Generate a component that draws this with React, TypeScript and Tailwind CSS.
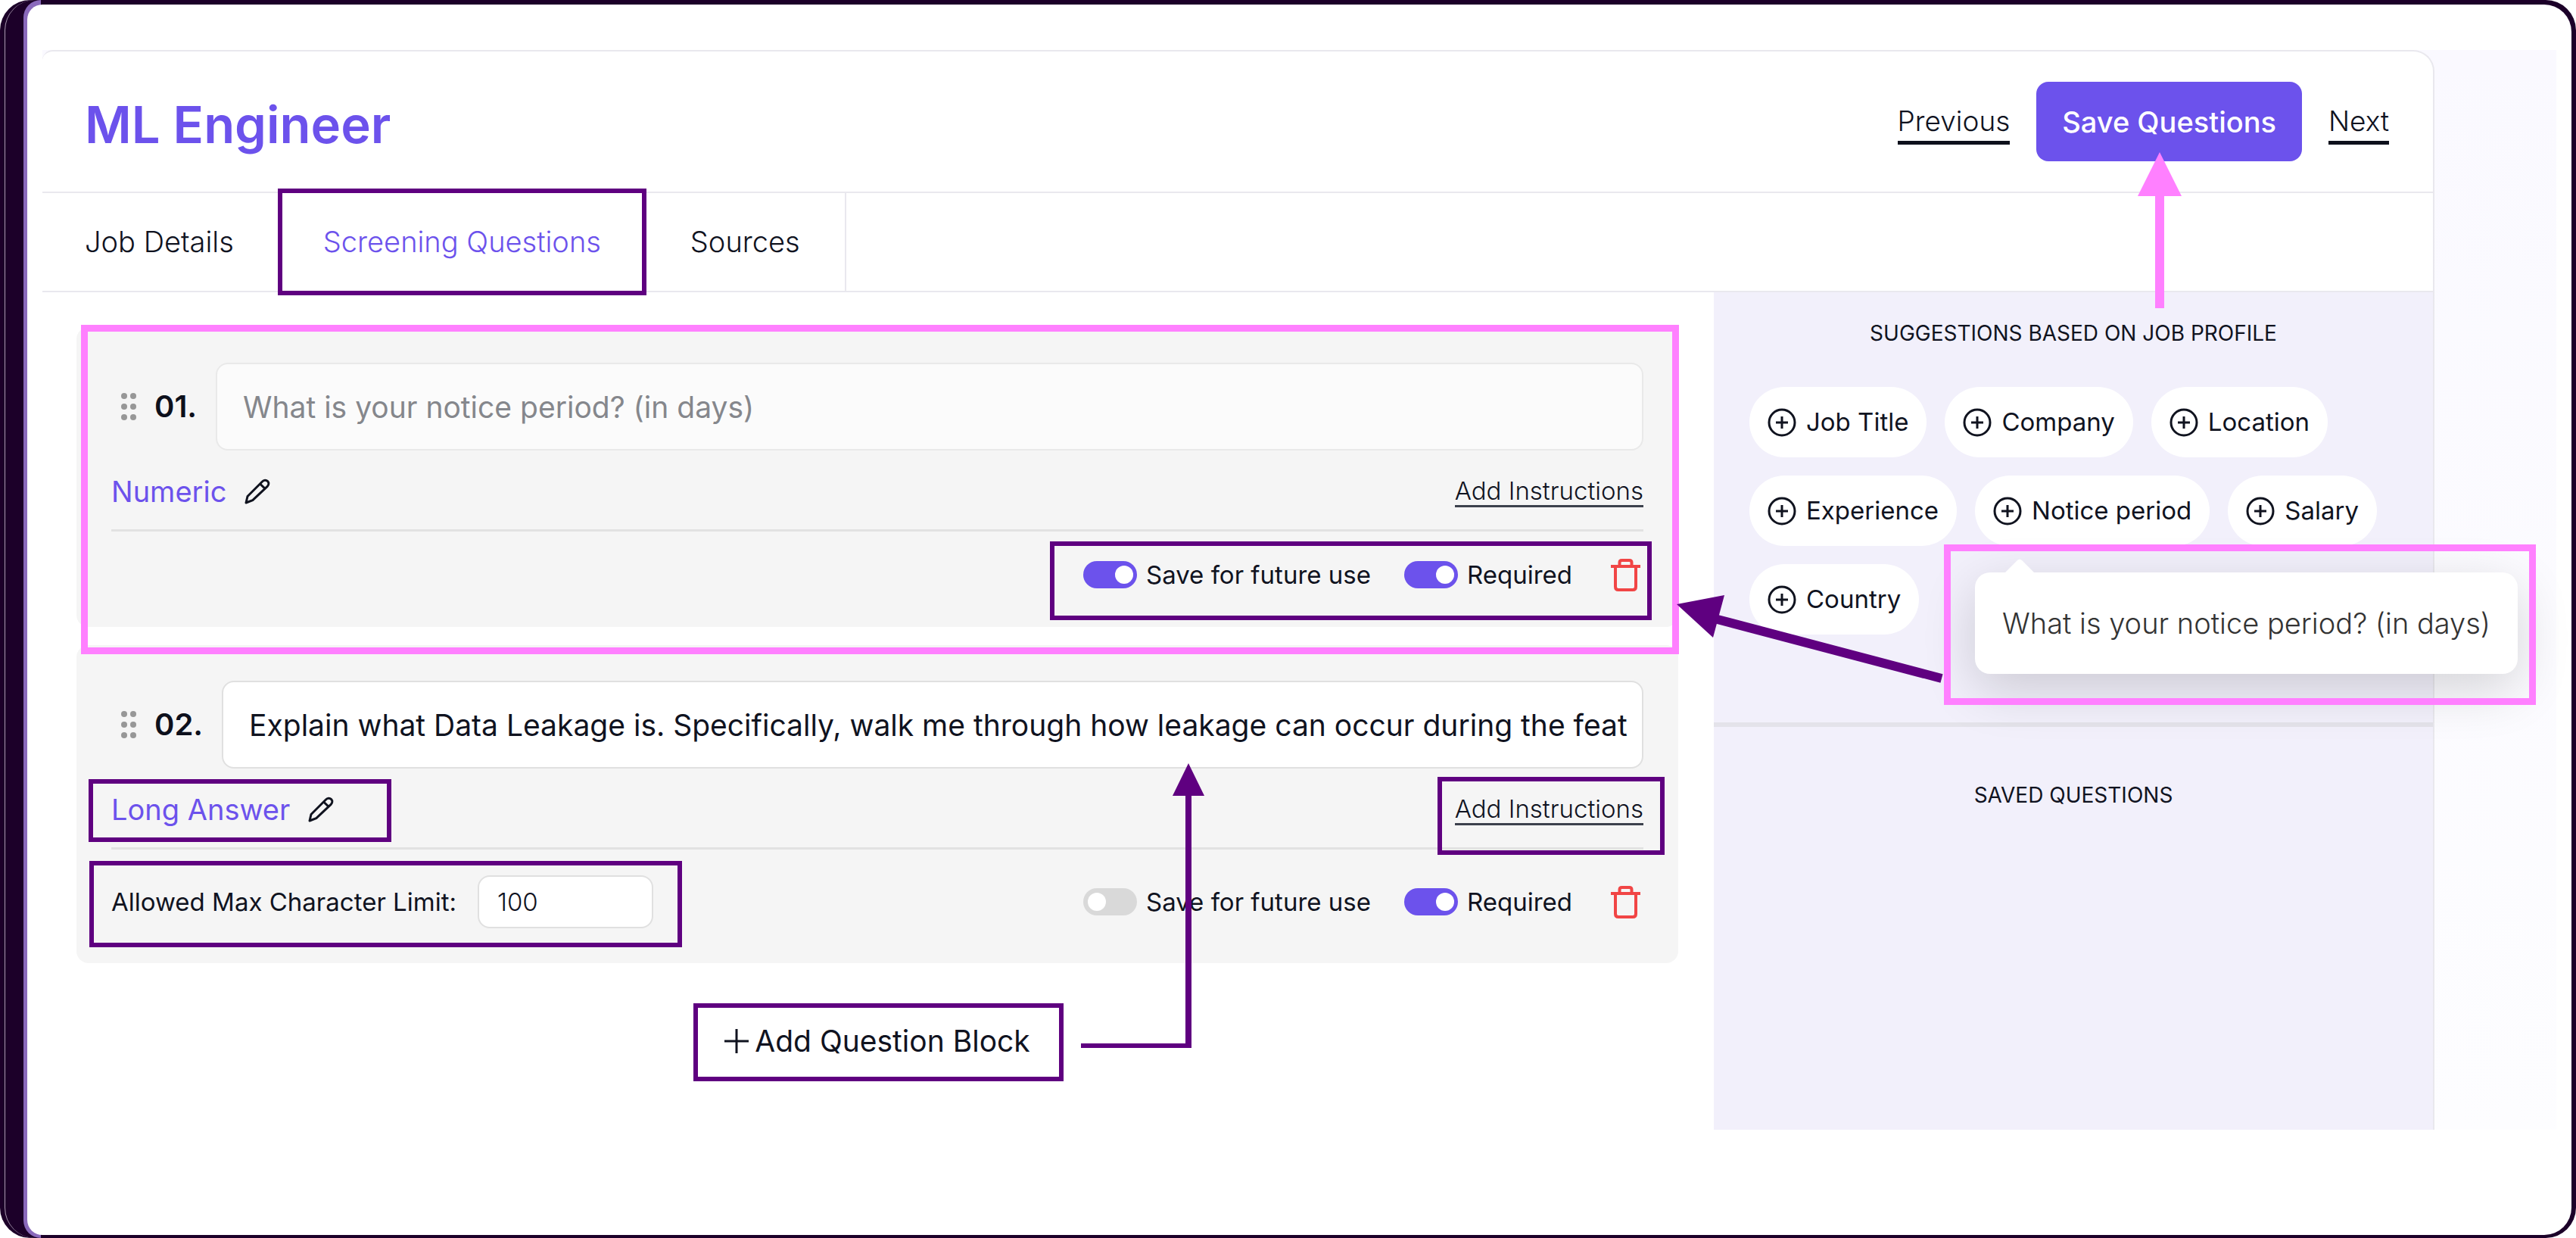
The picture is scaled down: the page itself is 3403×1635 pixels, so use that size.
import React, { useState } from "react";

interface Question {
  id: string;
  number: string;
  text: string;
  type: string;
  disabled?: boolean;
  limit?: number;
  saveForFuture: boolean;
  required: boolean;
}

const initialQuestions: Question[] = [
  {
    id: "q1",
    number: "01.",
    text: "What is your notice period? (in days)",
    type: "Numeric",
    disabled: true,
    saveForFuture: true,
    required: true,
  },
  {
    id: "q2",
    number: "02.",
    text: "Explain what Data Leakage is. Specifically, walk me through how leakage can occur during the feat",
    type: "Long Answer",
    limit: 100,
    saveForFuture: false,
    required: true,
  },
];

const tabs = ["Job Details", "Screening Questions", "Sources"];

const suggestions = [
  "Job Title",
  "Company",
  "Location",
  "Experience",
  "Notice period",
  "Salary",
  "Country",
];

// Coloured frame drawn over the element that it points out
const Highlight = ({ className }: { className: string }) => (
  <span
    aria-hidden="true"
    className={`pointer-events-none absolute z-10 ${className}`}
  />
);

const PencilIcon = () => (
  <svg width="34" height="34" viewBox="0 0 34 34" fill="none" stroke="#10131f" strokeWidth="3" strokeLinejoin="round">
    <path d="M2 32 L4 23.5 L23.5 4 C25.5 1.8 28.6 1.6 30.6 3.6 C32.4 5.6 32.2 8.4 30.2 10.4 L10.8 28.6 Z" />
    <path d="M20.5 7 L27.2 13.4" />
  </svg>
);

const TrashIcon = () => (
  <svg width="39" height="44" viewBox="0 0 39 44" fill="none" stroke="#f14545" strokeWidth="4">
    <path d="M0 11 H39" />
    <path d="M11.5 10 V6 Q11.5 3 14.5 3 H24.5 Q27.5 3 27.5 6 V10" />
    <path d="M6 11 V38 Q6 42 10 42 H29 Q33 42 33 38 V11" />
  </svg>
);

const GripIcon = () => (
  <svg width="20" height="36" viewBox="0 0 20 36" fill="#979797">
    <circle cx="4" cy="4" r="4" />
    <circle cx="16" cy="4" r="4" />
    <circle cx="4" cy="18" r="4" />
    <circle cx="16" cy="18" r="4" />
    <circle cx="4" cy="32" r="4" />
    <circle cx="16" cy="32" r="4" />
  </svg>
);

const PlusCircleIcon = () => (
  <svg width="38" height="38" viewBox="0 0 38 38" fill="none" stroke="#10131f" strokeWidth="3">
    <circle cx="19" cy="19" r="17" />
    <path d="M19 11 V27 M11 19 H27" />
  </svg>
);

const Toggle = ({
  label,
  checked,
  onChange,
}: {
  label: string;
  checked: boolean;
  onChange: (value: boolean) => void;
}) => (
  <label className="flex items-center gap-3 text-[33px] leading-[40px] text-[#10131f]">
    <input
      type="checkbox"
      role="switch"
      checked={checked}
      onChange={(e) => onChange(e.target.checked)}
      className="h-9 w-[71px] shrink-0 appearance-none rounded-full bg-[#d9d9d9] p-[6px] before:block before:size-6 before:rounded-full before:bg-white checked:bg-[#6c52ec] checked:before:ml-9"
    />
    {label}
  </label>
);

const QuestionCard = ({ question }: { question: Question }) => {
  const [text, setText] = useState(question.text);
  const [limit, setLimit] = useState(String(question.limit ?? ""));
  const [save, setSave] = useState(question.saveForFuture);
  const [required, setRequired] = useState(question.required);
  const hasLimit = question.limit !== undefined;

  return (
    <section className="relative rounded-[16px] bg-[#f5f5f5] px-[46px] pb-[46px] pt-[47px]">
      <div className="flex items-center">
        <button type="button" aria-label="Reorder question" className="ml-[13px]">
          <GripIcon />
        </button>
        <label
          htmlFor={question.id}
          className="ml-6 mr-[25px] text-[40px] leading-[48px] font-semibold text-[#0d101c]"
        >
          {question.number}
        </label>
        <input
          id={question.id}
          type="text"
          value={text}
          disabled={question.disabled}
          onChange={(e) => setText(e.target.value)}
          className="h-[116px] min-w-0 flex-1 rounded-[16px] border-2 border-[#e0e0e0] bg-white pl-[34px] pr-4 text-[39px] text-[#10131f] disabled:border-[#e9e9e9] disabled:bg-[#fbfbfb] disabled:text-[#85878c]"
        />
      </div>

      <div className="flex h-[107px] items-center justify-between border-b-3 border-[#e2e2e2] pt-1">
        <div className="relative flex items-center gap-6">
          <span className="text-[38px] leading-[46px] text-[#6c52ec]">
            {question.type}
          </span>
          <button type="button" aria-label="Edit type">
            <PencilIcon />
          </button>
          {hasLimit && (
            <Highlight className="-left-[30px] -right-[76px] -top-[17px] -bottom-[20px] border-[6px] border-[#5f0080]" />
          )}
        </div>
        <div className="relative">
          <a
            href="#"
            className="block border-b-3 border-[#3c414d] text-[33px] leading-[38px] font-light text-[#10131f]"
          >
            Add Instructions
          </a>
          {hasLimit && (
            <Highlight className="-left-[23px] -right-[28px] -top-[23px] -bottom-[39px] border-[6px] border-[#5f0080]" />
          )}
        </div>
      </div>

      <div className="flex items-center pt-[34px]">
        {hasLimit && (
          <div className="relative flex items-center gap-7 text-[33px] leading-[40px] text-[#10131f]">
            <label htmlFor={`${question.id}-limit`}>
              Allowed Max Character Limit:
            </label>
            <input
              id={`${question.id}-limit`}
              type="text"
              value={limit}
              onChange={(e) => setLimit(e.target.value)}
              className="h-[70px] w-[232px] rounded-[16px] border-2 border-[#e0e0e0] bg-white px-6 text-[33px] font-light"
            />
            <Highlight className="-left-[29px] -right-[38px] -top-[19px] -bottom-[25px] border-[6px] border-[#5f0080]" />
          </div>
        )}
        <div className="relative ml-auto flex h-[46px] items-center">
          <Toggle label="Save for future use" checked={save} onChange={setSave} />
          <div className="ml-11">
            <Toggle label="Required" checked={required} onChange={setRequired} />
          </div>
          <button type="button" aria-label="Delete question" className="ml-[51px] mr-1">
            <TrashIcon />
          </button>
          {!hasLimit && (
            <Highlight className="-left-[44px] -right-[11px] -top-[21px] -bottom-[37px] border-[6px] border-[#5f0080]" />
          )}
        </div>
      </div>

      {!hasLimit && (
        <Highlight className="left-[6px] -right-px -top-[3px] -bottom-[36px] border-[9px] border-[#ff80ff]" />
      )}
    </section>
  );
};

const NoticeTooltip = () => (
  <div role="tooltip" className="absolute left-0 top-full z-20 mt-[35px]">
    <div className="relative rounded-[20px] bg-white px-9 py-[43px] text-[38px] leading-[48px] font-light whitespace-nowrap text-[#333333] shadow-[0_20px_70px_rgba(0,0,0,0.16)]">
      What is your notice period? (in days)
    </div>
    <svg width="40" height="19" viewBox="0 0 40 19" className="absolute -top-[18px] left-[39px]" fill="#fff">
      <path d="M0 19 L17 2 Q20 -1 23 2 L40 19 Z" />
    </svg>
    <Highlight className="-left-[41px] -right-[24px] -top-[37px] -bottom-[41px] border-[9px] border-[#ff80ff]" />
    {/* arrow to the first question */}
    <svg
      width="356"
      height="124"
      viewBox="0 0 356 124"
      className="pointer-events-none absolute -left-[394px] top-[28px] z-20"
    >
      <path d="M50 33 L350 112" stroke="#5f0080" strokeWidth="12" />
      <path d="M0 14 L63 2 L48 58 Z" fill="#5f0080" />
    </svg>
  </div>
);

const App = () => {
  const [activeTab, setActiveTab] = useState("Screening Questions");

  return (
    <div className="bg-white font-['Inter','Liberation_Sans',sans-serif]">
      <div className="relative flex min-h-screen overflow-hidden rounded-[40px] bg-[#1c0029] pb-1 pl-[31px] pr-[6px] pt-[6px]">
        <span className="absolute -right-10 inset-y-0 left-[6px] rounded-l-[40px] border-l border-[#a99bb0]" />
        <span className="absolute inset-y-0 left-[31px] w-[23px] rounded-l-[24px] bg-[#8a69bb]" />

        <div className="relative ml-[5px] min-w-0 flex-1 rounded-l-[20px] rounded-r-[36px] bg-white px-5 pb-[138px] pt-[60px]">
          <div className="flex bg-linear-to-b from-[#faf9ff] to-[#fdfdff]">
            <main className="min-w-0 flex-1 rounded-tl-[14px] rounded-tr-[28px] border-r-2 border-t-2 border-[#e9e8ee] bg-white">
              <header className="flex h-[187px] items-center justify-between border-b-2 border-[#e9e8ee] pl-14 pr-[58px]">
                <h1 className="pt-2 text-[67px] leading-[80px] font-semibold text-[#6c52ec]">
                  ML Engineer
                </h1>
                <nav className="flex items-center gap-[35px] text-[37px] leading-[44px]">
                  <a href="#" className="border-b-5 border-[#0d101c] pt-2 pb-1 font-light text-[#10131f]">
                    Previous
                  </a>
                  <div className="relative">
                    <button
                      type="button"
                      className="h-[105px] rounded-[16px] bg-[#6c52ec] px-[34px] text-[38px] font-medium text-white"
                    >
                      Save Questions
                    </button>
                    <svg
                      width="58"
                      height="206"
                      viewBox="0 0 58 206"
                      className="pointer-events-none absolute left-[134px] top-[93px] z-20"
                      fill="#ff80ff"
                    >
                      <path d="M29 0 L58 58 H35 V206 H23 V58 H0 Z" />
                    </svg>
                  </div>
                  <a href="#" className="border-b-5 border-[#0d101c] pt-2 pb-1 font-light text-[#10131f]">
                    Next
                  </a>
                </nav>
              </header>

              <div role="tablist" className="flex h-[131px] border-b-2 border-[#e9e8ee]">
                {tabs.map((tab) => (
                  <button
                    key={tab}
                    type="button"
                    role="tab"
                    aria-selected={tab === activeTab}
                    onClick={() => setActiveTab(tab)}
                    className={`relative px-[59px] text-[38px] font-light first:pl-14 last:border-r-2 last:border-[#e9e8ee] ${
                      tab === activeTab ? "text-[#6c52ec]" : "text-[#10131f]"
                    }`}
                  >
                    {tab}
                    {tab === activeTab && (
                      <Highlight className="-inset-x-px -bottom-[6px] -top-[6px] border-[6px] border-[#5f0080]" />
                    )}
                  </button>
                ))}
              </div>

              <div className="flex">
                <div className="flex min-w-0 flex-1 flex-col gap-6 pb-16 pl-[45px] pr-[47px] pt-[46px]">
                  {initialQuestions.map((q) => (
                    <QuestionCard key={q.id} question={q} />
                  ))}

                  <div className="relative mt-14 self-center">
                    <button
                      type="button"
                      className="flex items-center gap-2 px-10 text-[39px] leading-[46px] text-[#10131f]"
                    >
                      <svg width="32" height="32" viewBox="0 0 32 32" stroke="#10131f" strokeWidth="3">
                        <path d="M16 0 V32 M0 16 H32" />
                      </svg>
                      Add Question Block
                    </button>
                    <Highlight className="-left-px -right-1 -bottom-[30px] -top-[27px] border-[6px] border-[#5f0080]" />
                    {/* elbow arrow up to the second question */}
                    <svg
                      width="164"
                      height="377"
                      viewBox="0 0 164 377"
                      className="pointer-events-none absolute -top-[344px] left-full z-20 ml-[27px]"
                      fill="#5f0080"
                    >
                      <path d="M142 0 L163 43 H146 V376 H0 V370 H138 V43 H121 Z" />
                    </svg>
                  </div>
                </div>

                <aside className="w-[950px] shrink-0 bg-[#f2f0fb]">
                  <div className="h-[574px] border-b-6 border-[#e4e3ea] px-[47px]">
                    <h2 className="pt-[34px] text-center text-[28px] leading-[40px] text-[#10131f] uppercase">
                      Suggestions based on job profile
                    </h2>
                    <div className="mt-[51px] flex flex-wrap gap-6">
                      {suggestions.map((name) => (
                        <div key={name} className="relative">
                          <button
                            type="button"
                            className="flex h-[93px] items-center gap-[13px] rounded-full bg-white px-6 text-[33px] text-[#10131f]"
                          >
                            <PlusCircleIcon />
                            {name}
                          </button>
                          {name === "Notice period" && <NoticeTooltip />}
                        </div>
                      ))}
                    </div>
                  </div>
                  <h2 className="h-[532px] pt-[70px] text-center text-[28px] leading-[40px] text-[#10131f] uppercase">
                    Saved Questions
                  </h2>
                </aside>
              </div>
            </main>
            <div className="w-[161px] shrink-0" />
          </div>
        </div>
      </div>
    </div>
  );
};

export default App;
